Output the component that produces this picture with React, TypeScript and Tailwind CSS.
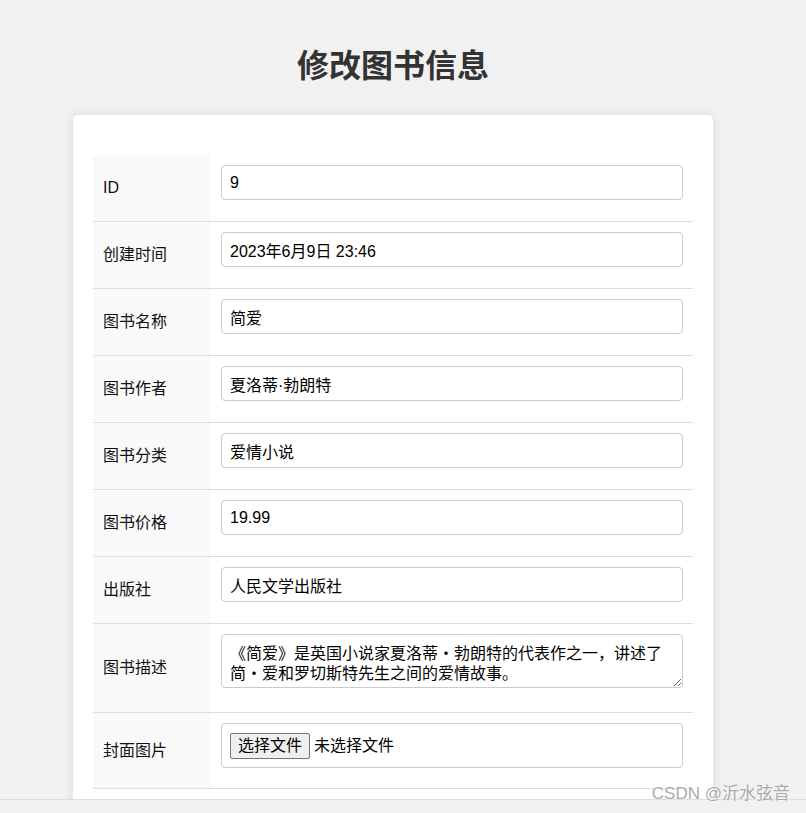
import React, { useState } from 'react'

type Field = {
  label: string
  value: string
  kind?: 'text' | 'textarea' | 'file'
}

const fields: Field[] = [
  { label: 'ID', value: '9' },
  { label: '创建时间', value: '2023年6月9日 23:46' },
  { label: '图书名称', value: '简爱' },
  { label: '图书作者', value: '夏洛蒂·勃朗特' },
  { label: '图书分类', value: '爱情小说' },
  { label: '图书价格', value: '19.99' },
  { label: '出版社', value: '人民文学出版社' },
  {
    label: '图书描述',
    value: '《简爱》是英国小说家夏洛蒂·勃朗特的代表作之一，讲述了简·爱和罗切斯特先生之间的爱情故事。',
    kind: 'textarea',
  },
  { label: '封面图片', value: '', kind: 'file' },
]

const font = { fontFamily: '"Liberation Sans", "Noto Sans CJK SC", sans-serif' }
// textarea falls back to the monospace/CJK face in the original
const areaFont = { fontFamily: '"Noto Sans CJK SC", "Liberation Mono", monospace' }

function FieldRow({ field }: { field: Field }) {
  const [val, setVal] = useState(field.value)

  // bottom padding differs per control, like the browser's baseline gap in a td
  let control: React.ReactNode
  let pad = 'pt-[10px] pb-[21px]'
  if (field.kind === 'textarea') {
    pad = 'pt-[10px] pb-[24px]'
    control = (
      <textarea
        value={val}
        onChange={(e) => setVal(e.target.value)}
        className="block w-full h-[54px] px-[8px] pt-[7px] text-[16px] leading-[20px] text-black border border-[#ccc] rounded-[4px] bg-white outline-none resize-y"
        style={areaFont}
      />
    )
  } else if (field.kind === 'file') {
    pad = 'pt-[10px] pb-[20px]'
    control = (
      <label className="flex items-center w-full h-[45px] px-[8px] border border-[#ccc] rounded-[4px] bg-white cursor-pointer">
        <span className="h-[26px] px-[7px] flex items-center text-[16px] text-black bg-[#efefef] border border-[#767676] rounded-[2px]">
          选择文件
        </span>
        <span className="ml-[4px] text-[16px] text-black">未选择文件</span>
        <input type="file" className="hidden" />
      </label>
    )
  } else {
    control = (
      <input
        value={val}
        onChange={(e) => setVal(e.target.value)}
        className="block w-full h-[35px] px-[8px] text-[16px] text-black border border-[#ccc] rounded-[4px] bg-white outline-none"
        style={font}
      />
    )
  }

  return (
    <div className="flex border-b border-[#ddd]">
      <div className="w-[117px] shrink-0 bg-[#f9f9f9] px-[10px] flex items-center text-[16px] text-[#111]">
        {field.label}
      </div>
      <div className={`flex-1 pl-[11px] pr-[10px] ${pad}`}>{control}</div>
    </div>
  )
}

export default function App() {
  return (
    <div className="relative h-screen overflow-hidden bg-[#f1f1f1]" style={font}>
      <div className="pr-[20px]">
        <h1 className="pt-[42px] h-[90px] text-center text-[32px] leading-[48px] font-bold text-[#333]">
          修改图书信息
        </h1>
        <div className="mx-auto mt-[25px] w-[640px] bg-white rounded-[5px] shadow-[0_0_10px_rgba(0,0,0,0.1)] px-[20px] pt-[40px] pb-[20px]">
          {fields.map((f) => (
            <FieldRow key={f.label} field={f} />
          ))}
        </div>
      </div>

      {/* bottom strip of the browser window */}
      <div className="absolute left-0 right-0 bottom-0 h-[14px] bg-[#f1f1f1] border-t border-[#dcdcdc]" />
      <div className="absolute right-[16px] bottom-[7px] text-[17px] text-[#aaa] [text-shadow:0_0_2px_#fff]">
        CSDN @沂水弦音
      </div>
    </div>
  )
}
